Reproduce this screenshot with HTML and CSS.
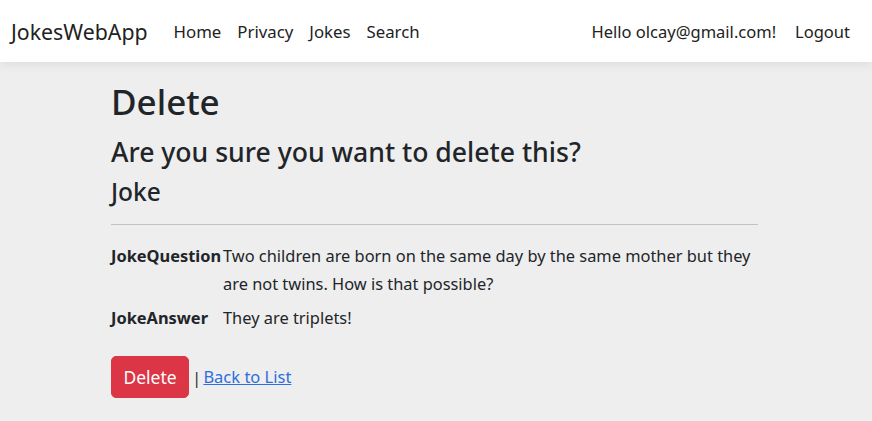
FILE: index.html
```html
<!DOCTYPE html>
<html lang="en">
<head>
<meta charset="utf-8">
<title>Delete - JokesWebApp</title>
<link rel="stylesheet" href="styles.css">
</head>
<body>
<header class="navbar">
  <div class="nav-left">
    <a class="brand" href="#">JokesWebApp</a>
    <nav class="nav-links">
      <a class="nav-link" href="#">Home</a>
      <a class="nav-link" href="#">Privacy</a>
      <a class="nav-link" href="#">Jokes</a>
      <a class="nav-link" href="#">Search</a>
    </nav>
  </div>
  <div class="nav-right">
    <a class="nav-link" href="#">Hello olcay@gmail.com!</a>
    <a class="nav-link" href="#">Logout</a>
  </div>
</header>
<main class="content">
  <h1 class="title">Delete</h1>
  <h3 class="subtitle">Are you sure you want to delete this?</h3>
  <h4 class="entity">Joke</h4>
  <hr class="rule">
  <dl class="details">
    <dt class="label">JokeQuestion</dt>
    <dd class="value">Two children are born on the same day by the same mother but they are not twins. How is that possible?</dd>
    <dt class="label">JokeAnswer</dt>
    <dd class="value">They are triplets!</dd>
  </dl>
  <form class="actions">
    <button type="button" class="btn-danger">Delete</button>
    <span class="sep">|</span>
    <a class="back-link" href="#">Back to List</a>
  </form>
</main>
</body>
</html>
```
FILE: styles.css
```css
* { box-sizing: border-box; }
html, body { height: 100%; }
body {
  margin: 0;
  background: #eeeeee;
  font-family: "Noto Sans", "Open Sans", sans-serif;
  color: #212529;
}
a { text-decoration: none; color: inherit; }

.navbar {
  height: 62px;
  background: #ffffff;
  display: flex;
  align-items: center;
  justify-content: space-between;
  padding: 2px 14px 0 11px;
  box-shadow: 0 2px 10px rgba(0,0,0,0.08);
  position: relative;
}
.nav-left, .nav-right { display: flex; align-items: center; }
.brand {
  font-size: 21.3px;
  line-height: 30px;
  color: #222;
  margin-right: 18px;
}
.nav-links { display: flex; align-items: center; }
.nav-links .nav-link { font-size: 16.8px; }
.nav-link {
  font-size: 16.5px;
  line-height: 24px;
  color: #222;
  padding: 0 8px;
}
.nav-right .nav-link + .nav-link { margin-left: 3px; }

.content {
  width: 650px;
  margin: 0 auto;
  padding: 0 0 16px;
  display: flex;
  flex-direction: column;
}
.title {
  font-size: 35px;
  line-height: 44px;
  font-weight: 500;
  margin: 18px 0 0;
}
.subtitle {
  font-size: 26.6px;
  line-height: 32px;
  font-weight: 500;
  margin: 12px 0 0;
}
.entity {
  font-size: 24.5px;
  line-height: 28px;
  font-weight: 500;
  margin: 10px 0 0;
}
.rule {
  margin: 18px 0 0;
  border: 0;
  border-top: 1px solid #c2c2c2;
  width: 647px;
  height: 0;
}
.details {
  display: grid;
  grid-template-columns: 112px 1fr;
  row-gap: 6px;
  margin: 17px 0 0;
  font-size: 16.4px;
  line-height: 28px;
}
.label { font-weight: 700; margin: 0; }
.value { margin: 0; }
.actions {
  display: flex;
  align-items: center;
  margin-top: 24px;
}
.btn-danger {
  width: 78px;
  height: 42px;
  background: #dc3545;
  border: 1px solid #dc3545;
  border-radius: 5px;
  color: #fff;
  font-family: inherit;
  font-size: 17.5px;
  padding: 0;
}
.sep {
  font-size: 17px;
  margin-left: 3px;
  color: #333;
}
.back-link {
  font-size: 16.5px;
  color: #2d6fdc;
  text-decoration: underline;
  margin-left: 2px;
  position: relative;
  top: -1px;
}
```
